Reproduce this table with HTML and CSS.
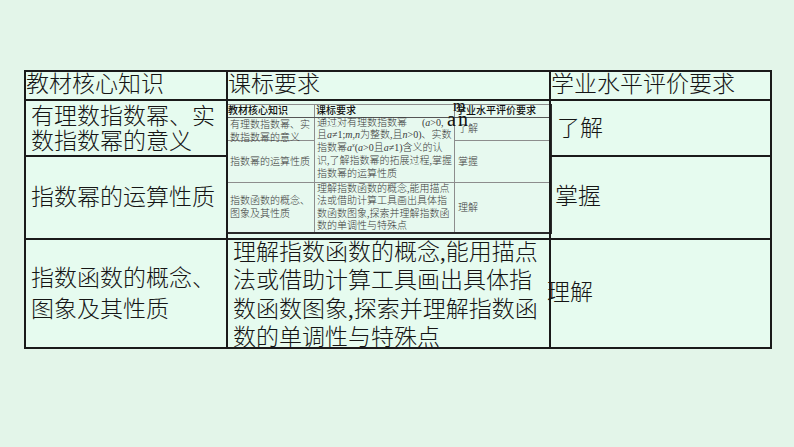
FILE: index.html
```html
<!DOCTYPE html>
<html lang="zh">
<head>
<meta charset="utf-8">
<link rel="stylesheet" href="styles.css">
</head>
<body>
<table class="main">
  <colgroup><col class="c1"><col class="c2"><col class="c3"></colgroup>
  <tr class="r0">
    <td class="hd">教材核心知识</td>
    <td class="hd hd2">课标要求</td>
    <td class="hd">学业水平评价要求</td>
  </tr>
  <tr class="r1">
    <td class="k1 k1a">有理数指数幂、实<br>数指数幂的意义</td>
    <td class="pic" rowspan="2">
      <table class="mini">
        <colgroup><col class="m1"><col class="m2"><col class="m3"></colgroup>
        <tr class="mr0"><th>教材核心知识</th><th>课标要求</th><th>学业水平评价要求</th></tr>
        <tr class="mr1">
          <td class="mc"><div class="fit2">有理数指数幂、实<br>数指数幂的意义</div></td>
          <td class="mt" rowspan="2"><div class="fit5">通过对有理数指数幂&nbsp;&nbsp;&nbsp;&nbsp;&nbsp;&nbsp;(<i>a</i>&gt;0,<br>且<i>a</i>≠1;<i>m</i>,<i>n</i>为整数,且<i>n</i>&gt;0)、实数<br>指数幂<i>a</i><sup>x</sup>(<i>a</i>&gt;0且<i>a</i>≠1)含义的认<br>识,了解指数幂的拓展过程,掌握<br>指数幂的运算性质</div></td>
          <td class="mc">了解</td>
        </tr>
        <tr class="mr2">
          <td class="mc">指数幂的运算性质</td>
          <td class="mc">掌握</td>
        </tr>
        <tr class="mr3">
          <td class="mc">指数函数的概念、<br>图象及其性质</td>
          <td class="mt mt3"><div class="fit4">理解指数函数的概念,能用描点<br>法或借助计算工具画出具体指<br>数函数图象,探索并理解指数函<br>数的单调性与特殊点</div></td>
          <td class="mc">理解</td>
        </tr>
      </table>
    </td>
    <td class="ev ev1">了解</td>
  </tr>
  <tr class="r2">
    <td class="k1">指数幂的运算性质</td>
    <td class="ev ev2">掌握</td>
  </tr>
  <tr class="r3">
    <td class="k1 k3">指数函数的概念、<br>图象及其性质</td>
    <td class="req"><div class="reqtxt">理解指数函数的概念,能用描点<br>法或借助计算工具画出具体指<br>数函数图象,探索并理解指数函<br>数的单调性与特殊点</div></td>
    <td class="ev ev3">理解</td>
  </tr>
</table>
<span class="glitch g-m">m</span>
<span class="glitch g-a">a</span>
<span class="glitch g-n">n</span>
</body>
</html>
```

FILE: styles.css
```css
html, body {
  margin: 0;
  padding: 0;
}
body {
  width: 794px;
  height: 447px;
  background: #e3f5e9;
  position: relative;
  overflow: hidden;
  font-family: "Liberation Serif", "Noto Sans CJK SC", serif;
  color: #151515;
}
.main {
  position: relative;
  top: 70px;
  left: 24px;
  width: 746px;
  height: 279px;
  border-collapse: collapse;
  table-layout: fixed;
  border: 2px solid #0d0d0d;
  background: #e6fbef;
}
.c1 { width: 202px; }
.c2 { width: 323px; }
.c3 { width: 221px; }
.main > tbody > tr > td {
  border: 2px solid #1a1a1a;
  padding: 0;
  font-size: 23px;
  line-height: 30px;
  vertical-align: middle;
  font-weight: 300;
}
.r0 { height: 28px; }
.r1 { height: 54px; }
.r2 { height: 81px; }
.r3 { height: 107px; }
.main > tbody > tr > td.hd {
  line-height: 24px;
  padding-left: 0;
  white-space: nowrap;
}
.main > tbody > tr > td.hd2 { padding-left: 0; }
.main > tbody > tr > td.k1 {
  padding-left: 5px;
  line-height: 25px;
}
.main > tbody > tr > td.k1a { padding-top: 3px; }
.main > tbody > tr > td.k3 { line-height: 31px; padding-top: 2px; }
.main > tbody > tr > td.req {
  padding-left: 5px;
  vertical-align: top;
  white-space: nowrap;
}
.reqtxt {
  height: 100px;
  margin-top: -1px;
  line-height: 28.5px;
}
.main > tbody > tr > td.ev1 { padding-left: 6px; padding-top: 2px; }
.main > tbody > tr > td.ev2 { padding-left: 4px; }
.main > tbody > tr > td.ev3 { padding-left: 0; text-indent: -4px; }
.main > tbody > tr > td.pic {
  vertical-align: top;
  padding: 3px 0 0 0;
}
.mini {
  width: 324px;
  height: 129px;
  margin-left: -2px;
  border-collapse: collapse;
  table-layout: fixed;
  border-top: 1px solid #8a8a8a;
  border-left: 1px solid #8a8a8a;
  border-right: 2px solid #2a2a2a;
  border-bottom: 2px solid #2a2a2a;
  background: #e7f9ef;
  font-size: 10px;
  line-height: 13px;
  color: #3a3a3a;
}
.m1 { width: 88px; }
.m2 { width: 140px; }
.m3 { width: 96px; }
.mini th, .mini td {
  border: 1px solid #8d8d8d;
  padding: 0 0 0 1px;
  white-space: nowrap;
  text-align: left;
  vertical-align: middle;
}
.mini th {
  font-weight: 500;
  color: #111;
  border-bottom: 1px solid #555;
  overflow: hidden;
  line-height: 11px;
}
.mr0 { height: 13px; }
.mr1 { height: 23px; }
.mr2 { height: 42px; }
.mr3 { height: 51px; }
.mini td.mc { padding-left: 3px; }
.mini td.mt { padding-left: 2px; vertical-align: top; padding-top: 0; }
.mini td.mt3 { vertical-align: middle; }
.fit2 { height: 20px; line-height: 13px; margin-top: -2px; }
.fit5 { height: 60px; line-height: 12.8px; margin-top: -1px; }
.fit4 { height: 46px; line-height: 12.4px; margin-top: -3px; }
.mini i {
  font-style: italic;
}
.mini sup {
  font-size: 6px;
  line-height: 0;
  font-style: italic;
}
.glitch {
  position: absolute;
  color: #111;
  line-height: 1;
}
.g-m { left: 453px; top: 98px; font-size: 16px; }
.g-a { left: 447px; top: 109px; font-size: 20px; }
.g-n { left: 458px; top: 109px; font-size: 20px; }
```
